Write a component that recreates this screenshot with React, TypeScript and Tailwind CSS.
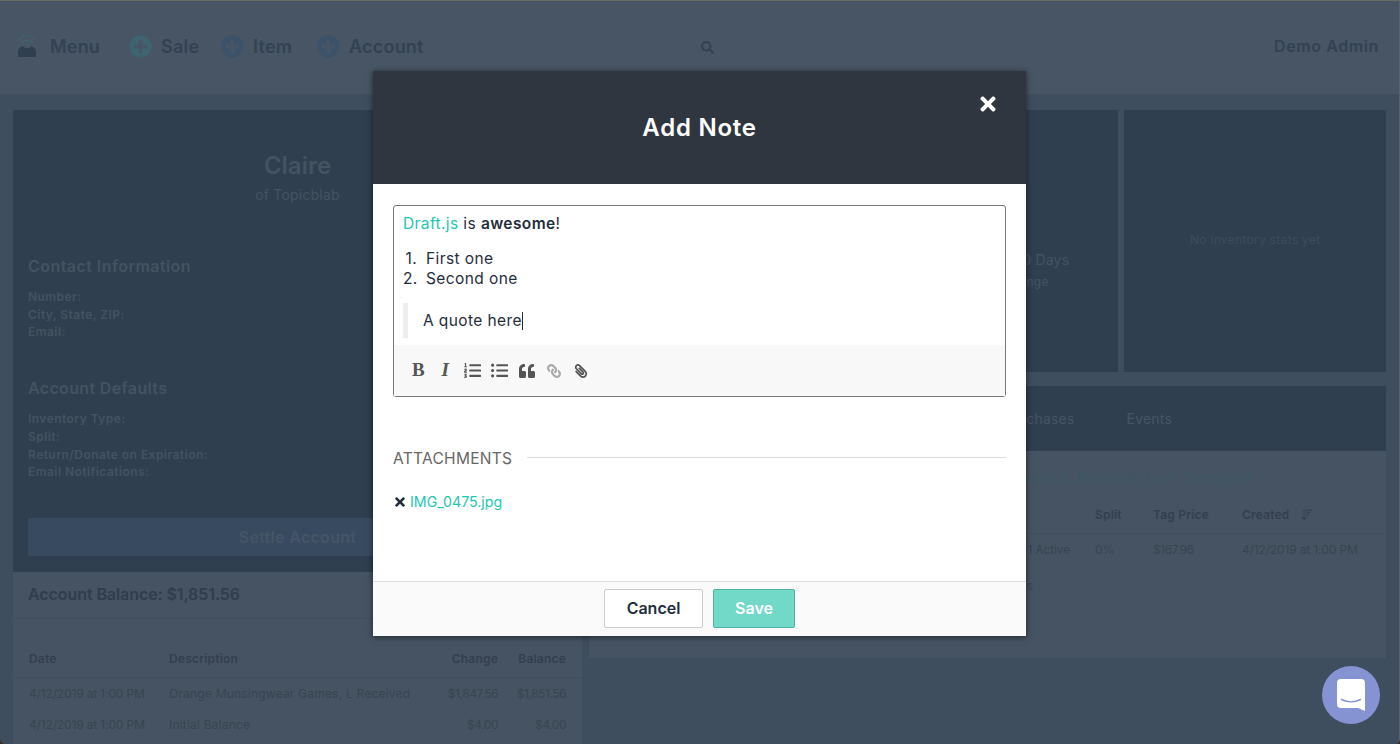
import { ArrowDownWideNarrow } from "lucide-react";
import {
  FaListOl,
  FaListUl,
  FaLink,
  FaPaperclip,
  FaPlusCircle,
  FaQuoteLeft,
  FaSearch,
  FaTimes,
} from "react-icons/fa";

function NavAction({ label, color, className }: { label: string; color: string; className?: string }) {
  return (
    <div className={`flex items-center gap-[9px] ${className ?? ""}`}>
      <FaPlusCircle size={23} color={color} />
      <span className="text-[18px] font-semibold tracking-[0.2px]">{label}</span>
    </div>
  );
}

function MenuLogo() {
  return (
    <svg width="18" height="22" viewBox="0 0 18 22" fill="none">
      <path d="M0 22v-4c0-4 2-6 5-7l1.5 2h5L13 11c3 1 5 3 5 7v4z" fill="#2f3f4f" />
      <path d="M3.5 8c2-3.5 9-3.5 11 0M1.5 5c3-6 12-6 15 0M5 10.5c1.500-2 6.500-2 8 0" stroke="#3f6670" strokeWidth="1.1" />
    </svg>
  );
}

function Header() {
  return (
    <header className="flex h-[93px] shrink-0 items-center bg-[#475565] pb-[3px] pl-[18px] pr-[20px] text-[#324253]">
      <div className="flex items-center gap-[14px]">
        <MenuLogo />
        <span className="text-[18px] font-semibold tracking-[0.2px]">Menu</span>
      </div>
      <div className="ml-[29px] flex">
        <NavAction label="Sale" color="#3d6470" className="w-[92px]" />
        <NavAction label="Item" color="#3c5269" className="w-[96px]" />
        <NavAction label="Account" color="#3c5269" />
      </div>
      <div className="ml-[277px] flex-1 pt-[2px]">
        <FaSearch size={13} />
      </div>
      <span className="text-[16px] font-semibold tracking-[0.6px]">Demo Admin</span>
    </header>
  );
}

function InfoRows({ rows }: { rows: string[] }) {
  return (
    <div className="mt-[10px] text-[12px] font-semibold leading-[17.7px] tracking-[0.45px]">
      {rows.map((row) => (
        <div key={row}>{row}</div>
      ))}
    </div>
  );
}

function LeftColumn() {
  const ledger = [
    ["4/12/2019 at 1:00 PM", "Orange Munsingwear Games, L Received", "$1,847.56", "$1,851.56"],
    ["4/12/2019 at 1:00 PM", "Initial Balance", "$4.00", "$4.00"],
  ];
  return (
    <section className="flex w-[569px] shrink-0 flex-col">
      <div className="h-[462px] bg-[#2f3f4f] px-[15px] pt-[40px] text-[#445362]">
        <div className="text-center">
          <div className="text-[24px] font-semibold leading-[32px]">Claire</div>
          <div className="mt-[3px] text-[14px] leading-[20px] tracking-[0.2px]">of Topicblab</div>
        </div>
        <h3 className="mt-[49px] text-[16px] font-semibold leading-[24px] tracking-[0.45px]">Contact Information</h3>
        <InfoRows rows={["Number:", "City, State, ZIP:", "Email:"]} />
        <h3 className="mt-[35px] text-[16px] font-semibold leading-[24px] tracking-[0.35px]">Account Defaults</h3>
        <InfoRows rows={["Inventory Type:", "Split:", "Return/Donate on Expiration:", "Email Notifications:"]} />
        <div className="mt-[37px] flex h-[38px] items-center justify-center bg-[#384a60] text-[16px] font-semibold tracking-[0.3px] text-[#465566]">
          Settle Account
        </div>
      </div>
      <div className="flex-1 bg-[#465363] text-[#333f4f]">
        <div className="flex h-[47px] items-center border-b border-[#3f4e5e] px-[15px] pb-[2px] text-[16px] font-semibold tracking-[-0.08px] text-[#2f3d4d]">
          Account Balance: $1,851.56
        </div>
        <div className="mt-[22px] grid h-[37px] grid-cols-[140px_1fr_80px_68px] items-center border-b border-[#3f4e5e] px-[16px] text-[12px] font-semibold tracking-[0.2px]">
          <span>Date</span>
          <span>Description</span>
          <span className="text-right">Change</span>
          <span className="text-right">Balance</span>
        </div>
        {ledger.map((row) => (
          <div
            key={row[1]}
            className="grid h-[31px] grid-cols-[140px_1fr_80px_68px] items-center px-[16px] text-[12px] tracking-[0.2px] text-[#37454f]"
          >
            <span className="tracking-[-0.15px]">{row[0]}</span>
            <span>{row[1]}</span>
            <span className="text-right tracking-[-0.45px]">{row[2]}</span>
            <span className="text-right tracking-[-0.45px]">{row[3]}</span>
          </div>
        ))}
      </div>
    </section>
  );
}

function RightColumn() {
  return (
    <section className="flex w-[797px] shrink-0 flex-col text-[#3d4c5c]">
      <div className="grid h-[262px] grid-cols-3 gap-[6px]">
        <div className="bg-[#2f3f4f]" />
        <div className="flex flex-col items-center bg-[#2f3f4f] pt-[139px] text-[#445362]">
          <div className="text-[14px] leading-[22px] tracking-[0.2px]">Average Time: 120 Days</div>
          <div className="text-[12px] leading-[22px] tracking-[0.2px]">Inventory Age Range</div>
        </div>
        <div className="flex items-center justify-center bg-[#2f3f4f] pb-[3px] text-[12px] tracking-[0.3px] text-[#3d4c5c]">
          No inventory stats yet
        </div>
      </div>
      <div className="mt-[14px] flex h-[65px] items-center justify-end gap-[52px] bg-[#2f3f4f] pr-[214px] text-[14px] tracking-[0.2px] text-[#465566]">
        <span>Purchases</span>
        <span>Events</span>
      </div>
      <div className="h-[207px] bg-[#465363] pt-[14px]">
        <div className="flex h-[24px] items-center justify-end gap-[9px] pr-[135px] text-[14px] tracking-[0.5px] text-[#3b5862]">
          <span>Returned</span>
          <span>Donated</span>
          <span>Lost</span>
          <span>Damaged</span>
        </div>
        <div className="mt-[8px] grid h-[37px] grid-cols-[506px_58px_89px_1fr] items-center border-b border-[#3f4e5e] text-[12px] font-semibold tracking-[0.2px] text-[#333f4f]">
          <span />
          <span>Split</span>
          <span>Tag Price</span>
          <span className="flex items-center gap-[10px]">
            Created
            <ArrowDownWideNarrow size={14} strokeWidth={1.8} />
          </span>
        </div>
        <div className="grid h-[32px] grid-cols-[506px_58px_89px_1fr] items-center text-[12px] tracking-[-0.15px] text-[#37454f]">
          <span className="pr-[25px] text-right">1 Active</span>
          <span>0%</span>
          <span className="tracking-[-0.45px]">$167.96</span>
          <span>4/12/2019 at 1:00 PM</span>
        </div>
        <div className="mt-[11px] w-[444px] text-right text-[12px] leading-[18px] tracking-[0.2px] text-[#37454f]">
          Showing 1 of 1 results
        </div>
      </div>
    </section>
  );
}

function Editor() {
  const tools = [
    <span className="font-['Liberation_Serif',serif] text-[19px] font-bold text-[#555]">B</span>,
    <span className="font-['Liberation_Serif',serif] text-[19px] font-bold italic text-[#555]">I</span>,
    <FaListOl size={17} color="#555" />,
    <FaListUl size={17} color="#555" />,
    <FaQuoteLeft size={16} color="#555" />,
    <FaLink size={14} color="#aaa" className="-scale-x-100" />,
    <FaPaperclip size={14} color="#555" className="-scale-x-100" />,
  ];
  return (
    <div className="flex h-[192px] flex-col rounded-[3px] border border-[#777] text-[15.5px] tracking-[0.4px] text-[#1f2d3d]">
      <div className="px-[9px] pt-[6px]">
        <div className="leading-[24px]">
          <span className="text-[#1cc8b0]">Draft.js</span> is <b className="font-semibold">awesome</b>!
        </div>
        <ol className="mt-[13px] leading-[20px]">
          <li className="flex">
            <span className="mr-[9px] w-[14px] text-right">1.</span>First one
          </li>
          <li className="flex">
            <span className="mr-[9px] w-[14px] text-right">2.</span>Second one
          </li>
        </ol>
        <blockquote className="mt-[14px] flex h-[35px] items-center border-l-[5px] border-[#eee] pl-[15px]">
          A quote here
          <span className="h-[18px] w-px bg-[#1f2d3d]" />
        </blockquote>
      </div>
      <div className="mt-auto flex h-[51px] items-center bg-[#f8f8f8] pl-[11px]">
        {tools.map((tool, i) => (
          <span key={i} className="flex w-[27px] justify-center">
            {tool}
          </span>
        ))}
      </div>
    </div>
  );
}

function NoteModal() {
  return (
    <div className="absolute left-[373px] top-[71px] flex h-[565px] w-[653px] flex-col bg-white shadow-[0_1px_6px_rgba(0,0,0,0.55)]">
      <div className="relative flex h-[113px] shrink-0 items-center justify-center bg-[#2f363f] text-[24px] font-semibold tracking-[0.75px] text-white">
        Add Note
        <FaTimes size={22} className="absolute left-[604px] top-[22px]" />
      </div>
      <div className="flex-1 px-[20px] pt-[21px]">
        <Editor />
        <div className="mt-[50px] flex items-center gap-[15px] text-[#666]">
          <span className="text-[15.5px] leading-[24px] tracking-[0.3px]">ATTACHMENTS</span>
          <span className="mb-[4px] h-px flex-1 bg-[#ddd]" />
        </div>
        <div className="mt-[19px] flex h-[24px] items-center gap-[3px] text-[14.2px] text-[#1cc8b0]">
          <FaTimes size={14} color="#1f2d3d" />
          <span>IMG_0475.jpg</span>
        </div>
      </div>
      <div className="flex h-[55px] shrink-0 items-center justify-center gap-[10px] border-t border-[#ddd] bg-[#fafafa] pb-[2px] text-[16px] font-semibold">
        <button className="h-[39px] w-[99px] rounded-[2px] border border-[#ccc] bg-white text-[#1f2d3d]">Cancel</button>
        <button className="h-[39px] w-[82px] rounded-[2px] border border-[#4fb3a3] bg-[#72d8c8] text-white">Save</button>
      </div>
    </div>
  );
}

function ChatBubble() {
  return (
    <div className="absolute left-[1322px] top-[666px] flex h-[58px] w-[58px] items-center justify-center rounded-full bg-[#8593d2]">
      <svg width="28" height="32" viewBox="0 0 28 32" fill="none">
        <path d="M4 0h20a4 4 0 0 1 4 4v28l-7-3H4a4 4 0 0 1-4-4V4a4 4 0 0 1 4-4z" fill="#fff" />
        <path d="M4.500 20.500c6 3 13 3 19 0" stroke="#8593d2" strokeWidth="1.4" strokeLinecap="round" />
      </svg>
    </div>
  );
}

export default function App() {
  return (
    <div className="relative h-[744px] w-[1400px] overflow-hidden bg-[#3a2c1e] font-['Inter',sans-serif]">
      <div className="flex h-full flex-col overflow-hidden rounded-b-[5px] border-r border-t border-r-[#55626f] border-t-[#6b6b5f] bg-[#3e4e5f]">
        <Header />
        <main className="flex min-h-0 flex-1 gap-[7px] pl-[13px] pt-[16px]">
          <LeftColumn />
          <RightColumn />
        </main>
      </div>
      <NoteModal />
      <ChatBubble />
    </div>
  );
}
